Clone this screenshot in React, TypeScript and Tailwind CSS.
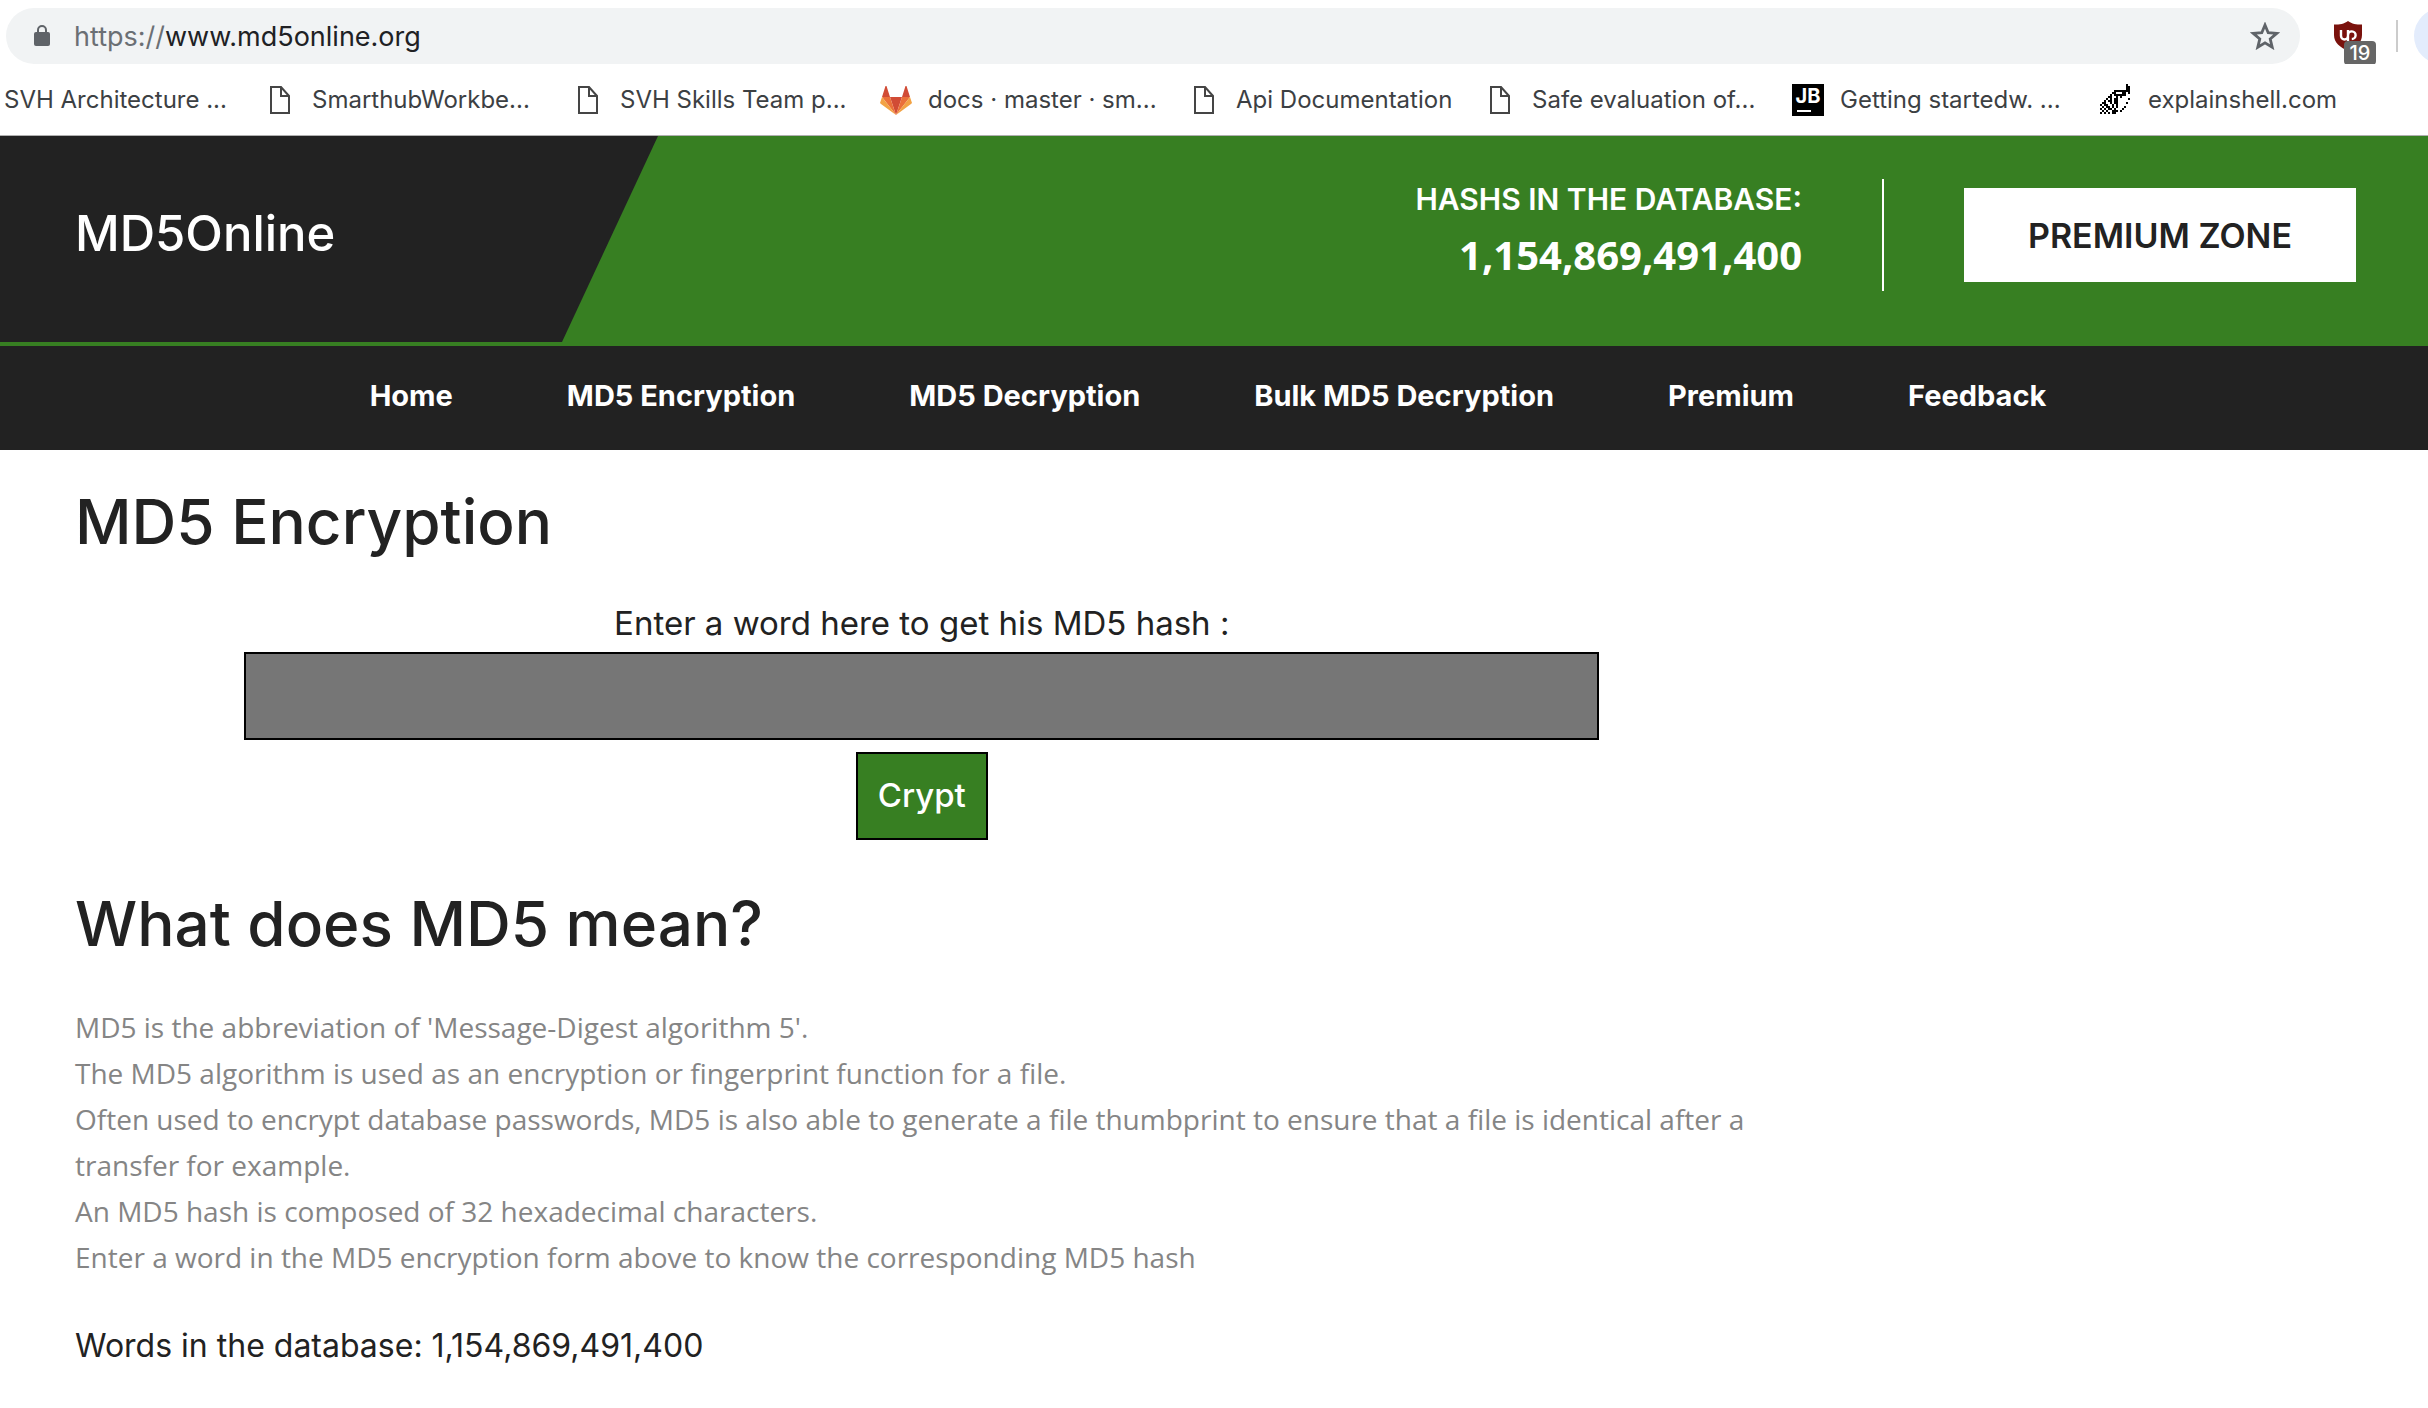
import React from "react";

const PageIcon = () => (
  <svg className="h-7 w-5" viewBox="0 0 20 28" fill="none" stroke="#454545" strokeWidth="2">
    <path d="M1 1h10l8 9v17H1z" />
    <path d="M11 1v9h8" />
  </svg>
);

const GitlabIcon = () => (
  <svg className="h-[30px] w-8" viewBox="0 0 32 30">
    <path fill="#d14b35" d="M16 30 22 12H10z" />
    <path fill="#ea7039" d="M16 30 10 12H2zM16 30l6-18h8z" />
    <path fill="#f2a244" d="M2 12 0 18l1 1 15 11zM30 12l2 6-1 1-15 11z" />
    <path fill="#d14b35" d="M2 12h8L6.500 1h-1zM30 12h-8l3.500-11h1z" />
  </svg>
);

const JetbrainsIcon = () => (
  <span className="flex size-8 flex-col items-center justify-between bg-black pb-1 text-xl leading-6 font-bold text-white">
    JB
    <span className="mr-2 h-0.5 w-3.5 bg-white" />
  </span>
);

const shellPixels = [
  ".............#..",
  ".............##.",
  ".............##.",
  ".......########.",
  "......##...##.#.",
  ".....#.######...",
  "....##..#.#.....",
  "...#.#.##.....#.",
  "..#.##.##.......",
  ".##..#.##....#..",
  "#.##..#.#.......",
  ".#.##.#.#...#...",
  "#.#.##.#...#....",
  ".#.#..###.#.....",
  "#.#.#.##........",
];

const ShellIcon = () => (
  <svg className="size-8" viewBox="0 0 16 16" shapeRendering="crispEdges">
    {shellPixels.flatMap((row, y) =>
      row.split("").map((cell, x) => (cell === "#" ? <rect key={`${x}-${y}`} x={x} y={y} width="1" height="1" /> : null)),
    )}
  </svg>
);

const LockIcon = () => (
  <svg className="h-[22px] w-4" viewBox="0 0 16 22">
    <rect y="7" width="16" height="14" rx="2" fill="#5f6368" />
    <path d="M4 8V5a4 4 0 0 1 8 0v3" fill="none" stroke="#5f6368" strokeWidth="2" />
  </svg>
);

const StarIcon = () => (
  <svg className="h-7 w-[30px]" viewBox="0 0 30 28" fill="none" stroke="#5f6368" strokeWidth="2.800">
    <path d="M15 3l3.200 7.700 8.500.7-6.500 5.500 2 8.300-7.200-4.400-7.200 4.400 2-8.300-6.500-5.500 8.500-.7z" />
  </svg>
);

const ShieldIcon = () => (
  <svg className="h-[30px] w-7" viewBox="0 0 28 30">
    <path d="M14 0c4 3 8 3.500 14 3.500V14c0 8-6 12-14 16C6 26 0 22 0 14V3.500C6 3.500 10 3 14 0z" fill="#7a120d" />
    <path d="M7 9v6a3.500 3.500 0 0 0 7 0V9M14 20v-6a3.800 3.800 0 1 1 3.800 4" fill="none" stroke="#fff" strokeWidth="2.400" />
  </svg>
);

const bookmarks = [
  { label: "SmarthubWorkbe...", icon: <PageIcon />, width: "w-[308px]" },
  { label: "SVH Skills Team p...", icon: <PageIcon />, width: "w-[308px]" },
  { label: "docs · master · sm...", icon: <GitlabIcon />, width: "w-[308px]" },
  { label: "Api Documentation", icon: <PageIcon />, width: "w-[296px]" },
  { label: "Safe evaluation of...", icon: <PageIcon />, width: "w-[308px]" },
  { label: "Getting startedw. ...", icon: <JetbrainsIcon />, width: "w-[308px]" },
  { label: "explainshell.com", icon: <ShellIcon />, width: "w-[308px]" },
];

const links = ["Home", "MD5 Encryption", "MD5 Decryption", "Bulk MD5 Decryption", "Premium", "Feedback"];

function BrowserBar() {
  return (
    <div className="border-b border-[#b0b0b0] font-['Inter',sans-serif]">
      <div className="flex items-center overflow-hidden pt-2 pl-1.5">
        <div className="flex h-14 min-w-0 flex-1 items-center rounded-full bg-[#f1f3f4] pr-5 pl-7">
          <LockIcon />
          <div className="ml-6 flex-1 pt-0.5 text-[27px] leading-8 text-[#202124]">
            <span className="text-[#6b6f74]">https://</span>www.md5online.org
          </div>
          <button type="button" aria-label="Bookmark this page">
            <StarIcon />
          </button>
        </div>
        <button type="button" aria-label="uBlock" className="relative ml-[34px] shrink-0">
          <ShieldIcon />
          <span className="absolute top-5 left-2.5 flex h-6 w-8 items-center justify-center rounded bg-[#666] text-xl font-medium text-white">
            19
          </span>
        </button>
        <div className="ml-[34px] h-8 w-0.5 shrink-0 bg-[#ccc]" />
        <button type="button" aria-label="Profile" className="-mr-[42px] ml-4 size-14 shrink-0 rounded-full bg-[#e3ecfc]" />
      </div>
      <nav aria-label="Bookmarks" className="flex h-[71px] items-center overflow-hidden pl-1 text-2xl whitespace-nowrap text-[#3c4043]">
        <a href="#" className="w-[260px] shrink-0">SVH Architecture ...</a>
        {bookmarks.map((b) => (
          <a key={b.label} href="#" className={`flex shrink-0 items-center gap-4 ${b.width}`}>
            <span className="flex w-8 justify-center">{b.icon}</span>
            {b.label}
          </a>
        ))}
      </nav>
    </div>
  );
}

export default function App() {
  return (
    <div className="min-h-screen bg-white font-['Inter',sans-serif] text-[#222]">
      <BrowserBar />
      <header>
        <div className="flex justify-between bg-[#377f22] pb-1">
          <div className="flex h-[206px] w-[658px] items-center bg-[#222] pb-3 pl-[75px] [clip-path:polygon(0_0,100%_0,562px_100%,0_100%)]">
            <a href="#" className="text-[49px] leading-none font-medium text-white">MD5Online</a>
          </div>
          <div className="flex items-center pr-[72px] pb-2">
            <div className="pr-20 pb-2 text-right text-white">
              <div className="text-[30px] leading-10 font-semibold">HASHS IN THE DATABASE:</div>
              <div className="mt-2 font-['Open_Sans',sans-serif] text-[40px] leading-[56px] font-bold">1,154,869,491,400</div>
            </div>
            <div className="h-28 w-0.5 bg-white" />
            <a href="#" className="ml-20 flex h-[94px] w-[392px] items-center justify-center bg-white text-[34px] font-semibold">
              PREMIUM ZONE
            </a>
          </div>
        </div>
        <nav aria-label="Main" className="flex h-[104px] items-center justify-center gap-[114px] bg-[#222] pr-3 pb-1 text-[29px] font-bold whitespace-nowrap text-white">
          {links.map((l) => (
            <a key={l} href="#">{l}</a>
          ))}
        </nav>
      </header>
      <main className="px-[75px] pt-9">
        <div className="w-3/4 pr-[15px]">
          <h1 className="text-[62px] leading-[72px] font-medium">MD5 Encryption</h1>
          <form className="mt-9 flex flex-col items-center" onSubmit={(e) => e.preventDefault()}>
            <label htmlFor="word" className="text-[33px] leading-[58px]">Enter a word here to get his MD5 hash :</label>
            <input id="word" type="text" className="h-[88px] w-4/5 border-2 border-black bg-[#767676] px-5 text-[33px] text-white" />
            <button type="submit" className="mt-3 flex h-[88px] w-[132px] items-center justify-center border-2 border-black bg-[#377f22] text-[33px] font-medium text-white">
              Crypt
            </button>
          </form>
          <h2 className="mt-12 text-[62px] leading-[72px] font-medium">What does MD5 mean?</h2>
          <p className="mt-11 font-['Open_Sans',sans-serif] text-[28px] leading-[46px] text-[#858585]">
            MD5 is the abbreviation of 'Message-Digest algorithm 5'.
            <br />
            The MD5 algorithm is used as an encryption or fingerprint function for a file.
            <br />
            Often used to encrypt database passwords, MD5 is also able to generate a file thumbprint to ensure that a file is identical after a transfer for example.
            <br />
            An MD5 hash is composed of 32 hexadecimal characters.
            <br />
            Enter a word in the MD5 encryption form above to know the corresponding MD5 hash
          </p>
          <p className="mt-9 text-[32px] leading-[60px]">Words in the database: 1,154,869,491,400</p>
        </div>
      </main>
    </div>
  );
}
